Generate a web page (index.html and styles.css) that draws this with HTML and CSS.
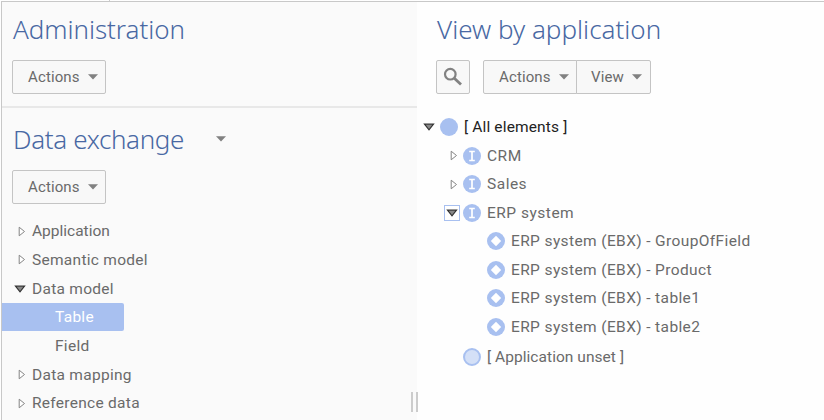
FILE: index.html
```
<!DOCTYPE html>
<html lang="en">
<head>
<meta charset="utf-8">
<title>Data exchange</title>
<link rel="stylesheet" href="styles.css">
</head>
<body>
<svg class="defs" width="0" height="0">
  <symbol id="down" viewBox="0 0 10 6"><path d="M0 .3h10L5 5.6z" fill="#818181"/></symbol>
  <symbol id="open" viewBox="0 0 12 8"><path d="M1.5 1.2h9L6 6.8z" fill="#888" stroke="#333" stroke-width="1.2"/></symbol>
  <symbol id="closed" viewBox="0 0 8 11"><path d="M1.2 1.2v8.6L6.5 5.5z" fill="#fff" stroke="#858585"/></symbol>
  <symbol id="info" viewBox="0 0 18 18"><circle cx="9" cy="9" r="9" fill="#a8c0f0"/><path d="M6.2 4.5h5.6M9 4.5v9M6.2 13.5h5.6" stroke="#fff" stroke-width="1.7" fill="none"/></symbol>
  <symbol id="diamond" viewBox="0 0 18 18"><circle cx="9" cy="9" r="9" fill="#a8c0f0"/><path d="M9 3.8 14.2 9 9 14.2 3.8 9z" fill="#fff"/></symbol>
</svg>
<div class="app">
  <aside class="side">
    <section class="admin">
      <h1 class="t-admin">Administration</h1>
      <button class="btn">Actions<svg class="down"><use href="#down"/></svg></button>
    </section>
    <section class="exchange">
      <div class="head"><h1 class="t-data">Data exchange</h1><svg class="down"><use href="#down"/></svg></div>
      <button class="btn">Actions<svg class="down"><use href="#down"/></svg></button>
      <ul class="nav">
        <li><i class="tog"><svg class="closed"><use href="#closed"/></svg></i>Application</li>
        <li><i class="tog"><svg class="closed"><use href="#closed"/></svg></i>Semantic model</li>
        <li><i class="tog"><svg class="open"><use href="#open"/></svg></i>Data model</li>
        <li class="leaf selected"><span>Table</span></li>
        <li class="leaf">Field</li>
        <li><i class="tog"><svg class="closed"><use href="#closed"/></svg></i>Data mapping</li>
        <li><i class="tog"><svg class="closed"><use href="#closed"/></svg></i>Reference data</li>
      </ul>
    </section>
    <div class="grip"></div>
  </aside>
  <main class="main">
    <h1 class="t-view">View by application</h1>
    <div class="tools">
      <button class="search"><svg width="20" height="20" viewBox="0 0 20 20" fill="none" stroke="#828282"><circle cx="7.3" cy="7.2" r="5.3" stroke-width="2.2"/><path d="m11 11 7 6.6" stroke-width="2.8"/></svg></button>
      <div class="group">
        <button class="btn">Actions<svg class="down"><use href="#down"/></svg></button>
        <button class="btn view">View<svg class="down"><use href="#down"/></svg></button>
      </div>
    </div>
    <ul class="tree">
      <li class="root"><i class="tog"><svg class="open"><use href="#open"/></svg></i><b class="dot"></b>[ All elements ]</li>
      <li class="l1"><i class="tog"><svg class="closed"><use href="#closed"/></svg></i><svg class="ico"><use href="#info"/></svg>CRM</li>
      <li class="l1"><i class="tog"><svg class="closed"><use href="#closed"/></svg></i><svg class="ico"><use href="#info"/></svg>Sales</li>
      <li class="l1"><i class="tog boxed"><svg class="open"><use href="#open"/></svg></i><svg class="ico"><use href="#info"/></svg>ERP system</li>
      <li class="l2"><svg class="ico"><use href="#diamond"/></svg>ERP system (EBX) - GroupOfField</li>
      <li class="l2"><svg class="ico"><use href="#diamond"/></svg>ERP system (EBX) - Product</li>
      <li class="l2"><svg class="ico"><use href="#diamond"/></svg>ERP system (EBX) - table1</li>
      <li class="l2"><svg class="ico"><use href="#diamond"/></svg>ERP system (EBX) - table2</li>
      <li class="unset"><b class="dot pale"></b>[ Application unset ]</li>
    </ul>
  </main>
</div>
</body>
</html>
```
FILE: styles.css
```
* { box-sizing: border-box; }
body { margin: 0; background: #fefefe; color: #6a6a6a; font: 15.5px/20px Roboto, sans-serif; letter-spacing: .33px; }
.defs { display: block; position: absolute; }
.app { display: flex; height: 420px; padding-top: 1px; background: linear-gradient(#ccc, #ccc) 109px 0 / 1px 1px no-repeat; }
.side { position: relative; width: 416px; border: 1px solid #c8c8c8; border-right: 0; border-bottom: 0; margin-left: 1px; background: #fafafa; }
.main { flex: 1; border-top: 1px solid #c8c8c8; padding: 11px 0 0 19px; }
.admin { height: 106px; padding: 11px 0 0 10px; border-bottom: 2px solid #e8e8e8; }
.exchange { padding-top: 15px; }
.exchange > .btn { margin-left: 10px; }
.head { display: flex; align-items: center; padding-left: 11px; }
.head .down { margin-left: 32px; }
h1 { margin: 0; height: 32px; font: 300 26px/32px "Noto Sans", sans-serif; color: #4868a3; white-space: nowrap; width: max-content; }
.t-admin { margin-left: 1px; letter-spacing: -.05px; }
.t-data { letter-spacing: -.35px; }
.t-view { margin-left: 1px; letter-spacing: 0; }
.btn, .search { display: flex; align-items: center; height: 34px; border: 1px solid #c4c4c4; border-radius: 2px; background: #f8f8f8; color: #6a6a6a; font: inherit; font-size: 15px; letter-spacing: .12px; padding: 0; }
.btn { width: 94px; padding-left: 15px; gap: 8px; }
.admin .btn { margin-top: 15px; }
.exchange > .btn { margin-top: 15px; }
.down { width: 10px; height: 6px; }
ul { margin: 0; padding: 0; list-style: none; }
.nav { padding-top: 13px; }
.nav li { display: flex; align-items: center; height: 28.65px; letter-spacing: .28px; }
.nav li:first-child { letter-spacing: 0; }
.tog { display: flex; align-items: center; justify-content: center; width: 16px; height: 16px; }
.nav .tog { margin: 0 4px 0 10px; }
.open { width: 12px; height: 8px; }
.closed { width: 8px; height: 11px; margin-left: 3px; }
.nav .leaf { padding-left: 53px; }
.nav .selected { padding: 0; }
.selected span { width: 122px; height: 28px; line-height: 29px; padding-left: 53px; background: #a8c0f0; color: #fff; border-radius: 0 2px 2px 0; }
.grip { position: absolute; left: 409px; top: 390px; width: 7px; height: 20px; border: solid #ccc; border-width: 0 2px; }
.tools { display: flex; gap: 13px; margin-top: 15px; }
.search { width: 34px; justify-content: center; }
.group { display: flex; }
.group .btn:first-child { border-radius: 2px 0 0 2px; }
.group .view { width: 75px; margin-left: -1px; padding-left: 14px; border-radius: 0 2px 2px 0; }
.tree { padding-top: 19px; margin-left: -19px; }
.tree li { display: flex; align-items: center; height: 28.5px; }
.tree .root { color: #222; padding-left: 4px; letter-spacing: .15px; }
.root .dot { margin-left: 3px; }
.tree .l1 { padding-left: 27px; letter-spacing: .5px; }
.tree .l2 { padding-left: 67px; letter-spacing: .38px; }
.tree .unset { padding-left: 46px; height: 31px; letter-spacing: .05px; }
.ico, .dot { width: 18px; height: 18px; margin: 0 6px 0 3px; }
.dot { border-radius: 50%; background: #a8c0f0; }
.pale { background: #d4e0f7; border: 2px solid #a8c0f0; margin-left: 0; }
.boxed { border: 1px solid #a8c0f0; background: #fff; }
```
